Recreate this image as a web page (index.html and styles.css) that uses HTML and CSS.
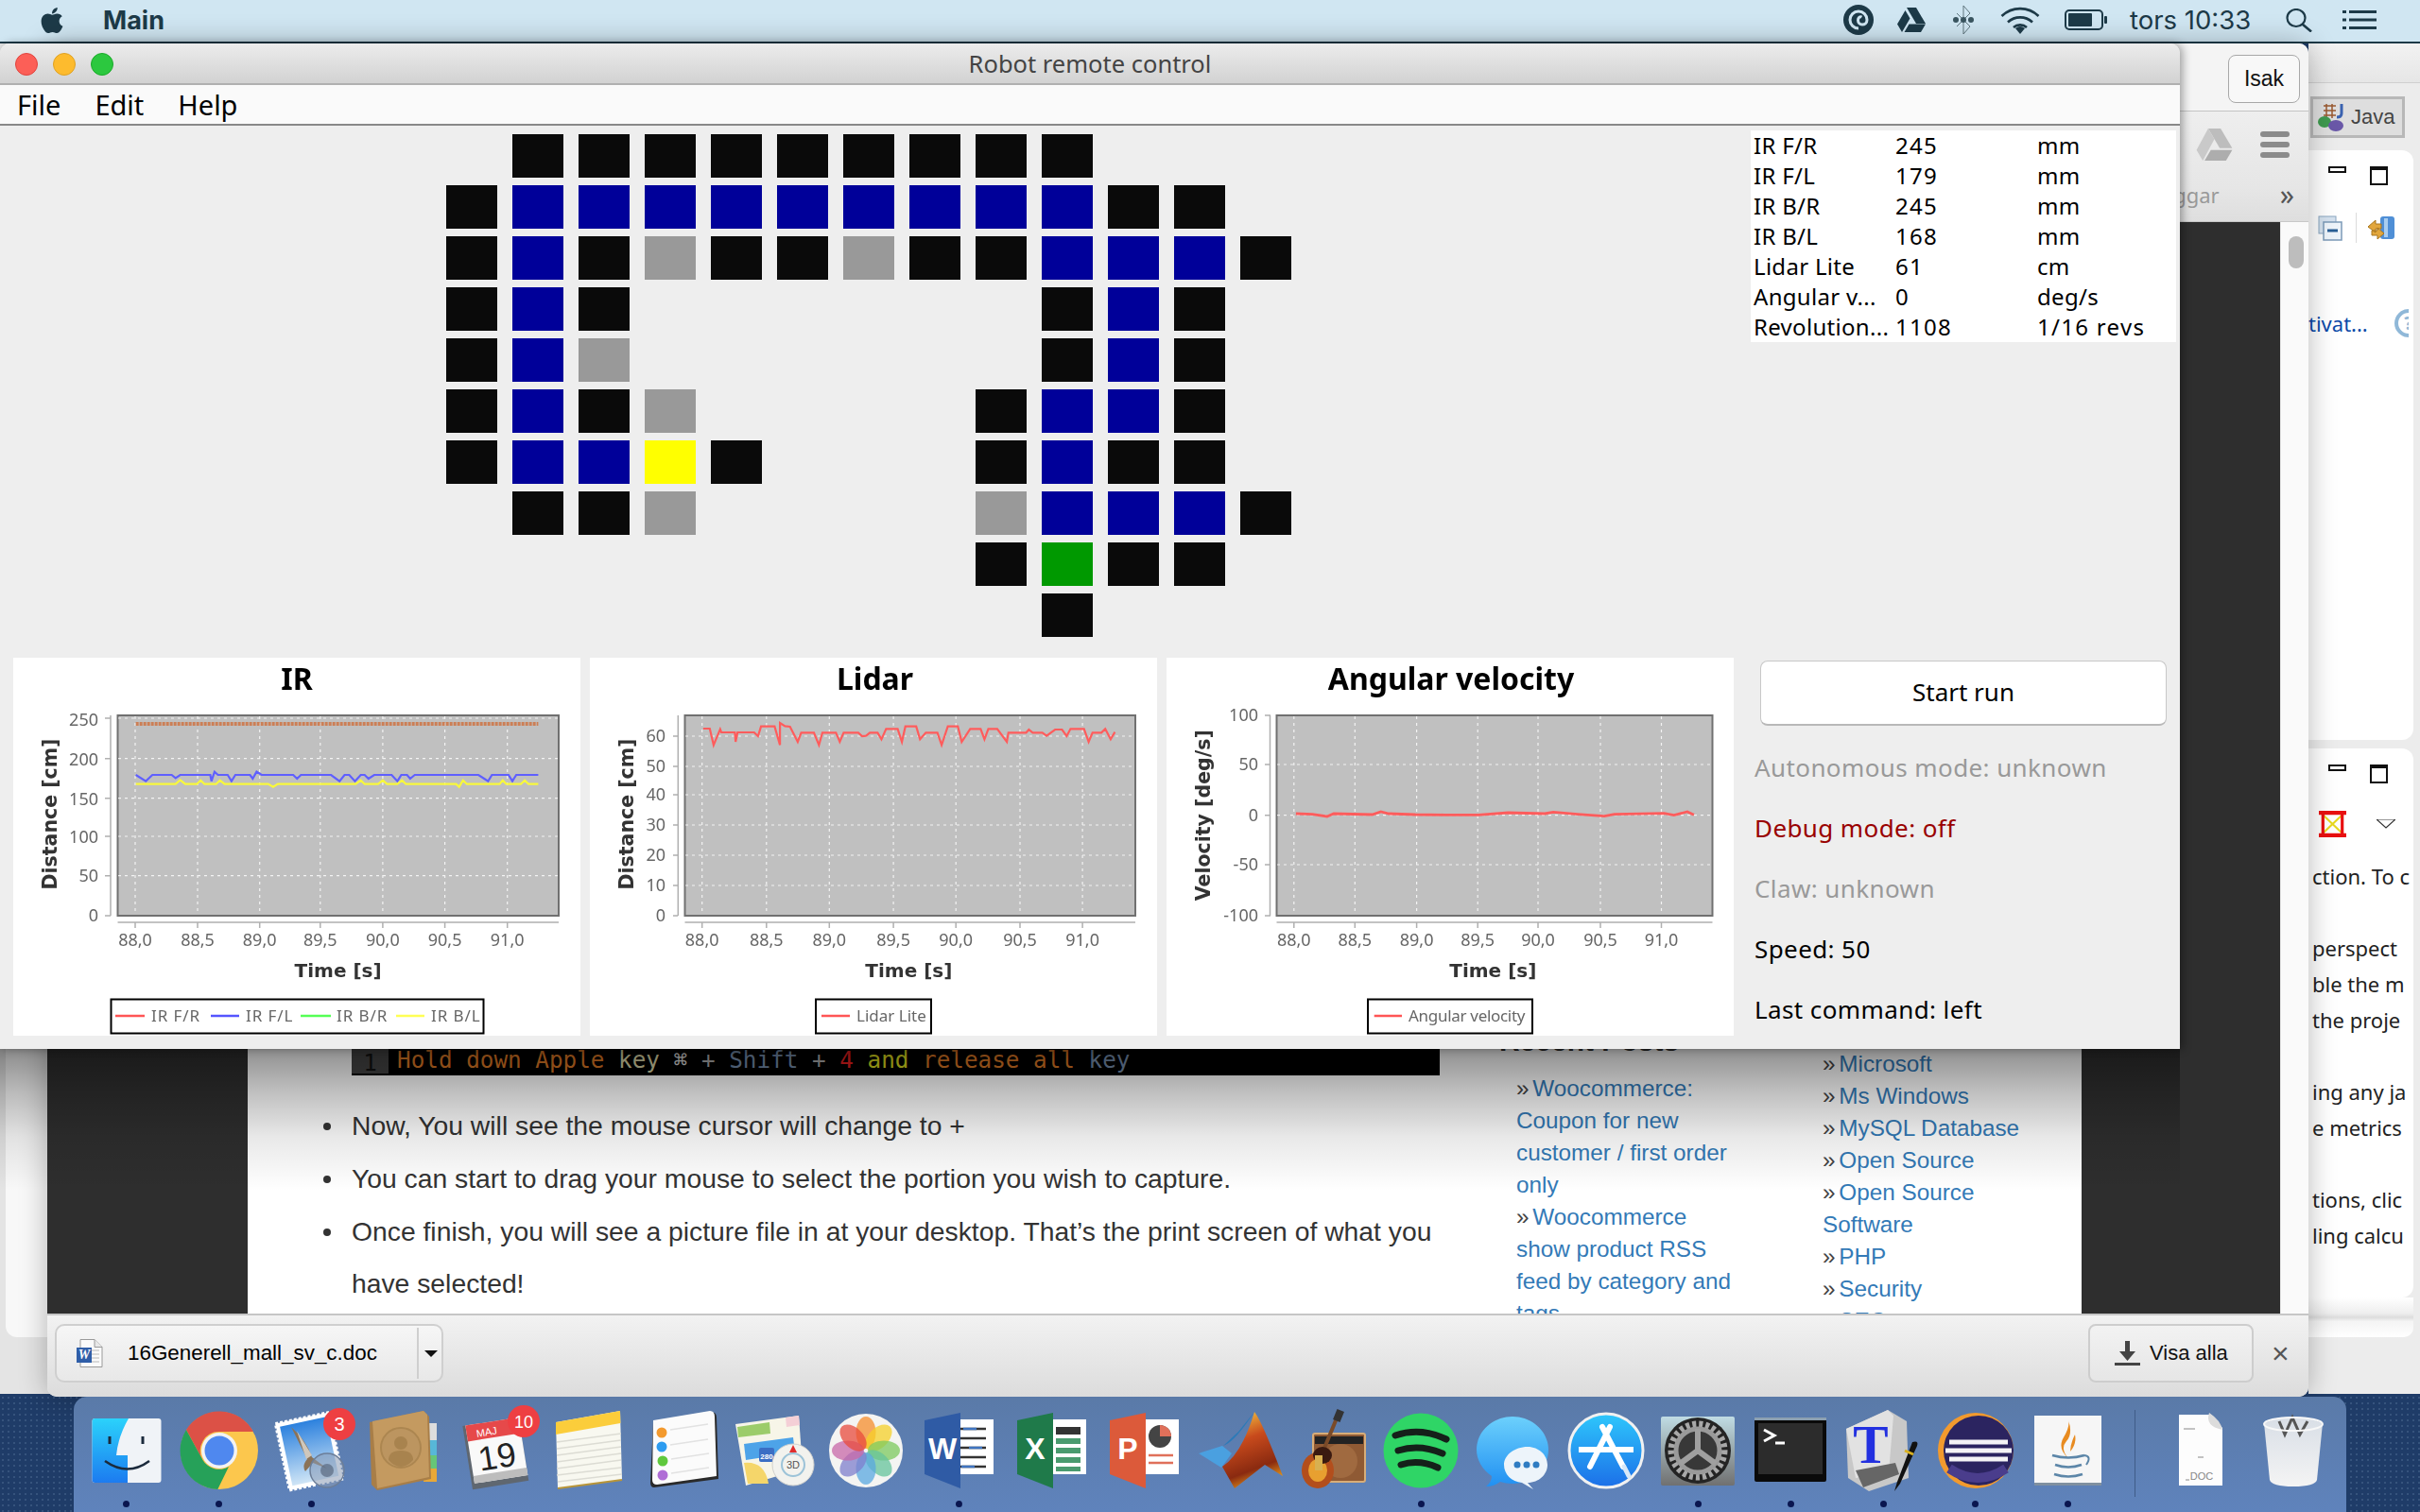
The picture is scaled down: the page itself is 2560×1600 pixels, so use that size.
FILE: index.html
```html
<!DOCTYPE html>
<html lang="sv">
<head>
<meta charset="utf-8">
<title>Robot remote control</title>
<link rel="stylesheet" href="styles.css">
</head>
<body>
<div class="desktop">

  <header class="menubar">
    <svg class="apple" viewBox="0 0 384 512"><path d="M318.7 268.7c-.2-36.7 16.4-64.4 50-84.8-18.8-26.9-47.2-41.7-84.7-44.6-35.5-2.8-74.3 20.7-88.5 20.7-15 0-49.4-19.7-76.4-19.7C63.3 141.2 4 184.8 4 273.5q0 39.3 14.4 81.2c12.8 36.7 59 126.7 107.2 125.2 25.2-.6 43-17.9 75.8-17.9 31.8 0 48.3 17.9 76.4 17.9 48.6-.7 90.4-82.5 102.6-119.3-65.2-30.7-61.7-90-61.7-91.9zm-56.6-164.2c27.3-32.4 24.8-61.9 24-72.5-24.1 1.4-52 16.4-67.9 34.9-17.5 19.8-27.8 44.3-25.6 71.9 26.1 2 49.9-11.4 69.5-34.3z"/></svg>
    <strong class="appname">Main</strong>
    <svg class="mi m-ring" viewBox="0 0 32 32"><circle cx="16" cy="16" r="16"/><path d="M16 25a9 9 0 1 1 9-9c0 3.500-2.500 5-5 5s-4.500-2-4.500-4.500 2-4.500 4-3.500" fill="none" stroke="#d0e6f2" stroke-width="3"/></svg>
    <svg class="mi m-drive" viewBox="0 0 30 26"><path d="M10 0h10l10 17h-10zM8.500 3l5 8.500L5 26 0 17.500zM7.500 26l5-8.500h17.500l-5 8.500z"/></svg>
    <svg class="mi m-bt" viewBox="0 0 22 32"><path d="M11 1v30l7-8-14-14M11 1l7 8-14 14" fill="none" stroke="#60777f" stroke-width="1"/><circle cx="3" cy="16" r="3" fill="#3a5560"/><circle cx="11" cy="16" r="3" fill="#3a5560"/><circle cx="19" cy="16" r="3" fill="#3a5560"/></svg>
    <svg class="mi m-wifi" viewBox="0 0 42 30"><path d="M1.500 11a28 28 0 0 1 39 0M8 17.500a19 19 0 0 1 26 0M14 23a10.500 10.500 0 0 1 14 0" fill="none" stroke="#1d3a48" stroke-width="2.600"/><path d="M21 30l-5-6a8 8 0 0 1 10 0z"/></svg>
    <svg class="mi m-batt" viewBox="0 0 45 22"><rect x="1" y="1" width="39" height="20" rx="4" fill="none" stroke="#1d3a48" stroke-width="2"/><rect x="4" y="4" width="25" height="14" rx="1"/><rect x="42" y="7" width="3" height="8" rx="1"/></svg>
    <span class="clock">tors 10:33</span>
    <svg class="mi m-search" viewBox="0 0 29 25"><ellipse cx="11" cy="10" rx="9.500" ry="9" fill="none" stroke="#1d3a48" stroke-width="2.200"/><path d="M17.500 16.500L27 24.500" stroke="#1d3a48" stroke-width="2.600"/></svg>
    <svg class="mi m-list" viewBox="0 0 36 20"><path d="M0 0h4v3H0zM0 8.500h4v3H0zM0 17h4v3H0zM7 0h29v3H7zM7 8.500h29v3H7zM7 17h29v3H7z"/></svg>
  </header>

  <section class="win eclipse">
    <div class="ecl-title"></div>
    <div class="ecl-persp">
      <div class="java-btn">
        <svg class="java-ico" viewBox="0 0 30 30"><path d="M6 3h13M6 8h13M6 13h13M9 1v15M15 1v15" stroke="#9a5a30" stroke-width="1.500" fill="none"/><path d="M25 1v10q0 4-5 4" stroke="#3a62b0" stroke-width="3" fill="none"/><ellipse cx="7" cy="20" rx="7" ry="6" fill="#3f9a50"/><ellipse cx="19" cy="24" rx="8" ry="6" fill="#6a58a8"/></svg>
        <span>Java</span>
      </div>
    </div>
    <div class="ecl-panel first">
      <div class="ecl-ctl"><span class="ctl-min"></span><span class="ctl-max"></span></div>
      <div class="ecl-tools">
        <svg class="tool" viewBox="0 0 26 27"><rect x="1" y="1" width="18" height="18" fill="#d5e2ef" stroke="#8aa5c0"/><rect x="6" y="7" width="19" height="19" fill="#eef4fa" stroke="#7c9ab8" stroke-width="1.500"/><path d="M10 16h11" stroke="#2a5f95" stroke-width="3"/></svg>
        <i class="tool-sep"></i>
        <svg class="tool wide" viewBox="0 0 30 27"><rect x="14" y="1" width="15" height="24" rx="3" fill="#4f8fd6"/><rect x="18" y="3" width="4" height="20" fill="#a9cdf0"/><path d="M1 12l8-7v4h6v5H9v4zM18 19l-7 6v-4H5v-5h6v-3z" fill="#e2a63c" stroke="#a87720"/></svg>
      </div>
      <div class="ecl-link"><span>tivat...</span><span class="help-clip"><i class="help-ring">?</i></span></div>
    </div>
    <div class="ecl-panel second">
      <div class="ecl-ctl"><span class="ctl-min"></span><span class="ctl-max"></span></div>
      <div class="ecl-tools two">
        <svg class="tool redbox" viewBox="0 0 27 26"><path d="M3 3l21 20M24 3L3 23" stroke="#e8d820" stroke-width="2"/><path d="M0 2h27M0 24h27" stroke="#e81010" stroke-width="4"/><path d="M4 2v22M23 2v22" stroke="#e81010" stroke-width="3"/></svg>
        <svg class="tool chev" viewBox="0 0 20 10"><path d="M0 0h20L10 9z" fill="#fff" stroke="#333" stroke-width="1.200"/></svg>
      </div>
      <p class="ecl-text first-line">ction. To c</p>
      <p class="ecl-text gap1">perspect</p>
      <p class="ecl-text">ble the m</p>
      <p class="ecl-text">the proje</p>
      <p class="ecl-text gap1">ing any ja</p>
      <p class="ecl-text">e metrics</p>
      <p class="ecl-text gap1">tions, clic</p>
      <p class="ecl-text">ling calcu</p>
    </div>
    <div class="ecl-band"></div>
  </section>

  <section class="win back"><div class="back-inner"></div></section>

  <section class="win chrome">
    <div class="chrome-top"><button class="isak">Isak</button></div>
    <div class="chrome-tools">
      <div class="tools-row">
        <svg class="drive-ico" viewBox="0 0 40 36"><path d="M13 0h14l13 22H26z" fill="#bdbdbd"/><path d="M13 0l7 12L7 36 0 24z" fill="#c9c9c9"/><path d="M9 36l7-12h24l-7 12z" fill="#adadad"/></svg>
        <div class="burger"><i></i><i></i><i></i></div>
      </div>
      <div class="book-row"><span class="ggar">ggar</span><span class="more">»</span></div>
    </div>
    <div class="page">
      <div class="page-dark left"></div>
      <article class="page-white">
        <div class="post">
          <div class="code">
            <span class="gutter">1</span>
            <code class="code-line"><span class="c-o">Hold down Apple</span> <span class="c-k">key</span> <span class="c-s">⌘</span> <span class="c-p">+</span> <span class="c-v">Shift</span> <span class="c-p">+</span> <span class="c-r">4</span> <span class="c-a">and</span> <span class="c-o">release all</span> <span class="c-v">key</span></code>
          </div>
          <ul class="steps">
            <li>Now, You will see the mouse cursor will change to +</li>
            <li>You can start to drag your mouse to select the portion you wish to capture.</li>
            <li>Once finish, you will see a picture file in at your desktop. That’s the print screen of what you have selected!</li>
          </ul>
        </div>
        <aside class="recent">
          <h3>Recent Posts</h3>
          <ul class="links">
            <li>» <a>Woocommerce: Coupon for new customer / first order only</a></li>
            <li>» <a>Woocommerce show product RSS feed by category and tags</a></li>
          </ul>
        </aside>
        <aside class="cats">
          <ul class="links">
            <li>» <a>Microsoft</a></li>
            <li>» <a>Ms Windows</a></li>
            <li>» <a>MySQL Database</a></li>
            <li>» <a>Open Source</a></li>
            <li>» <a>Open Source Software</a></li>
            <li>» <a>PHP</a></li>
            <li>» <a>Security</a></li>
            <li>» <a>SEO</a></li>
          </ul>
        </aside>
      </article>
      <div class="page-dark right"></div>
      <div class="scrollbar"><i></i></div>
    </div>
    <footer class="downloads">
      <div class="dl-item">
        <svg class="dl-doc" viewBox="0 0 28 30"><path d="M4 .500h15l8 8v21H4z" fill="#fafafa" stroke="#9a9a9a"/><path d="M19 .500v8h8" fill="#e8e8e8" stroke="#9a9a9a"/><path d="M14 12h10M14 16h10M14 20h10M14 24h10" stroke="#b8b8b8"/><rect y="9" width="16" height="16" fill="#2f5ea8"/><text class="dl-w" x="8" y="21">W</text></svg>
        <span class="dl-name">16Generell_mall_sv_c.doc</span>
        <span class="dl-caret"></span>
      </div>
      <button class="visa">
        <svg class="visa-ico" viewBox="0 0 27 26"><path d="M11 0h5v11h6l-8.500 10L5 11h6zM0 23h27v3H0z" fill="#444"/></svg>
        <span>Visa alla</span>
      </button>
      <span class="dl-close">×</span>
    </footer>
  </section>

  <div class="window-shadow"></div>

  <section class="win robot">
    <div class="robot-title">
      <div class="lights"><i class="red"></i><i class="amber"></i><i class="green"></i></div>
      <span class="robot-name">Robot remote control</span>
    </div>
    <nav class="robot-menu"><span>File</span><span>Edit</span><span>Help</span></nav>
    <div class="robot-top">
      <div class="map">
        <i></i><b class="k"></b><b class="k"></b><b class="k"></b><b class="k"></b><b class="k"></b><b class="k"></b><b class="k"></b><b class="k"></b><b class="k"></b><i></i><i></i><i></i>
        <b class="k"></b><b class="b"></b><b class="b"></b><b class="b"></b><b class="b"></b><b class="b"></b><b class="b"></b><b class="b"></b><b class="b"></b><b class="b"></b><b class="k"></b><b class="k"></b><i></i>
        <b class="k"></b><b class="b"></b><b class="k"></b><b class="g"></b><b class="k"></b><b class="k"></b><b class="g"></b><b class="k"></b><b class="k"></b><b class="b"></b><b class="b"></b><b class="b"></b><b class="k"></b>
        <b class="k"></b><b class="b"></b><b class="k"></b><i></i><i></i><i></i><i></i><i></i><i></i><b class="k"></b><b class="b"></b><b class="k"></b><i></i>
        <b class="k"></b><b class="b"></b><b class="g"></b><i></i><i></i><i></i><i></i><i></i><i></i><b class="k"></b><b class="b"></b><b class="k"></b><i></i>
        <b class="k"></b><b class="b"></b><b class="k"></b><b class="g"></b><i></i><i></i><i></i><i></i><b class="k"></b><b class="b"></b><b class="b"></b><b class="k"></b><i></i>
        <b class="k"></b><b class="b"></b><b class="b"></b><b class="y"></b><b class="k"></b><i></i><i></i><i></i><b class="k"></b><b class="b"></b><b class="k"></b><b class="k"></b><i></i>
        <i></i><b class="k"></b><b class="k"></b><b class="g"></b><i></i><i></i><i></i><i></i><b class="g"></b><b class="b"></b><b class="b"></b><b class="b"></b><b class="k"></b>
        <i></i><i></i><i></i><i></i><i></i><i></i><i></i><i></i><b class="k"></b><b class="n"></b><b class="k"></b><b class="k"></b><i></i>
        <i></i><i></i><i></i><i></i><i></i><i></i><i></i><i></i><i></i><b class="k"></b><i></i><i></i><i></i>
      </div>
      <table class="sensors">
        <tr><td>IR F/R</td><td>245</td><td>mm</td></tr>
        <tr><td>IR F/L</td><td>179</td><td>mm</td></tr>
        <tr><td>IR B/R</td><td>245</td><td>mm</td></tr>
        <tr><td>IR B/L</td><td>168</td><td>mm</td></tr>
        <tr><td>Lidar Lite</td><td>61</td><td>cm</td></tr>
        <tr><td>Angular v...</td><td>0</td><td>deg/s</td></tr>
        <tr><td>Revolution...</td><td>1108</td><td class="wide">1/16 revs</td></tr>
      </table>
    </div>
    <div class="robot-bottom">
      <div class="charts">
        <svg class="chart" viewBox="0 0 600 400">
          <text class="ctitle" x="300" y="34">IR</text>
          <rect class="plot" x="110.500" y="61" width="466.500" height="212"/>
          <path class="grid" d="M129 62V272M195 62V272M260.700 62V272M324.800 62V272M390.900 62V272M456.600 62V272M522.700 62V272M111 64H576M111 106.700H576M111 148.700H576M111 189H576M111 230.700H576"/>
          <g transform="translate(-14,-16) scale(.40816,.33333)">
            <path class="s-orange" d="M352 258H1395"/>
            <path class="s-blue" d="M352 420L378 440 395 420H445L455 430 467 420H545L548 440 556 410 565 420H590L600 440 610 420H648L655 432 665 410 678 420H760L770 432 780 420H858L880 440 893 420H905L920 440 935 420H945L955 432 970 420H1015L1030 440 1040 420H1055L1063 432 1075 420H1240L1255 432 1265 440 1275 420H1318L1328 440 1338 420H1395"/>
            <path class="s-yellow" d="M352 449H455L467 436 480 449H510L520 437 530 449H560L570 437 582 449H695L708 458 720 449H922L935 437 945 449H980L992 437 1003 449H1030L1042 437 1052 449H1182L1190 458 1200 437 1210 449H1295L1303 437 1312 449H1350L1360 437 1370 449H1395"/>
          </g>
          <path class="axis-line" d="M103 61V273M97 64H103M97 106.700H103M97 148.700H103M97 189H103M97 230.700H103M97 273H103M110.500 280H577M129 280v6M195 280v6M260.700 280v6M324.800 280v6M390.900 280v6M456.600 280v6M522.700 280v6"/>
          <g class="yt">
            <text x="90" y="72">250</text><text x="90" y="114">200</text><text x="90" y="156">150</text><text x="90" y="196">100</text><text x="90" y="237">50</text><text x="90" y="279">0</text>
          </g>
          <g class="xt">
            <text x="129" y="305">88,0</text><text x="195" y="305">88,5</text><text x="260.700" y="305">89,0</text><text x="324.800" y="305">89,5</text><text x="390.900" y="305">90,0</text><text x="456.600" y="305">90,5</text><text x="522.700" y="305">91,0</text>
          </g>
          <text class="alabel" x="343.600" y="338">Time [s]</text>
          <text class="alabel side-label" transform="translate(46,165.500) rotate(-90)">Distance [cm]</text>
          <rect class="legend" x="103.500" y="361.500" width="394" height="36"/>
          <path class="l-red" d="M108 379H139"/><text class="lg ir" x="146" y="385">IR F/R</text>
          <path class="l-blue" d="M209 379H239"/><text class="lg ir" x="246" y="385">IR F/L</text>
          <path class="l-green" d="M304 379H336"/><text class="lg ir" x="342" y="385">IR B/R</text>
          <path class="l-yellow" d="M405 379H435"/><text class="lg ir" x="442" y="385">IR B/L</text>
        </svg>

        <svg class="chart" viewBox="0 0 600 400">
          <text class="ctitle" x="301.500" y="34">Lidar</text>
          <rect class="plot" x="100.500" y="61" width="476.500" height="212"/>
          <path class="grid" d="M118.700 62V272M186.800 62V272M253.300 62V272M321.100 62V272M387.200 62V272M455 62V272M521.100 62V272M101 83H576M101 115H576M101 145H576M101 177H576M101 209H576M101 241H576"/>
          <g transform="translate(-14,-16) scale(.40816,.33333)">
            <path class="s-red" d="M328 273L345 273 355 325 372 275 375 285 410 285 412 315 417 285 460 285 470 297 478 266 513 266 527 325 527 255 540 265 553 267 573 315 582 286 615 286 628 325 637 286 672 286 682 315 692 286 730 286 740 297 750 296 760 286 780 286 790 307 802 274 832 274 843 315 852 266 880 266 890 307 905 286 935 286 946 325 962 266 988 266 998 315 1020 274 1047 274 1057 307 1067 274 1090 274 1115 315 1119 286 1165 286 1172 276 1182 286 1207 286 1218 296 1240 276 1258 276 1270 297 1280 274 1315 274 1327 315 1337 286 1360 286 1370 274 1384 307 1395 284"/>
          </g>
          <path class="axis-line" d="M93.300 61V273M88 83H93M88 115H93M88 145H93M88 177H93M88 209H93M88 241H93M88 273H93M100.500 280H577M118.700 280v6M186.800 280v6M253.300 280v6M321.100 280v6M387.200 280v6M455 280v6M521.100 280v6"/>
          <g class="yt">
            <text x="80" y="89">60</text><text x="80" y="121">50</text><text x="80" y="151">40</text><text x="80" y="183">30</text><text x="80" y="215">20</text><text x="80" y="247">10</text><text x="80" y="279">0</text>
          </g>
          <g class="xt">
            <text x="118.700" y="305">88,0</text><text x="186.800" y="305">88,5</text><text x="253.300" y="305">89,0</text><text x="321.100" y="305">89,5</text><text x="387.200" y="305">90,0</text><text x="455" y="305">90,5</text><text x="521.100" y="305">91,0</text>
          </g>
          <text class="alabel" x="337.400" y="338">Time [s]</text>
          <text class="alabel side-label" transform="translate(46,165.500) rotate(-90)">Distance [cm]</text>
          <rect class="legend" x="239" y="361.500" width="122" height="36"/>
          <path class="l-red" d="M245 379H275"/><text class="lg" x="282" y="385">Lidar Lite</text>
        </svg>

        <svg class="chart" viewBox="0 0 600 400">
          <text class="ctitle" x="301" y="34">Angular velocity</text>
          <rect class="plot" x="116.500" y="61" width="461" height="212"/>
          <path class="grid" d="M134.800 62V272M199.300 62V272M264.600 62V272M329.200 62V272M393 62V272M459 62V272M523.500 62V272M117 113H577M117 166.700H577M117 219H577"/>
          <g transform="translate(-14,-16) scale(.70175,.33333)">
            <path class="s-red thick" d="M215 543L240 545 262 552 272 543 330 546 343 537 355 543 395 546 440 547 490 547 535 540 590 543 603 538 640 545 680 551 695 545 770 542 785 548 805 537 815 547"/>
          </g>
          <path class="axis-line" d="M109.500 61V273M104 61H110M104 113H110M104 166.700H110M104 219H110M104 273H110M116.500 280H577.500M134.800 280v6M199.300 280v6M264.600 280v6M329.200 280v6M393 280v6M459 280v6M523.500 280v6"/>
          <g class="yt">
            <text x="97" y="67">100</text><text x="97" y="119">50</text><text x="97" y="173">0</text><text x="97" y="225">-50</text><text x="97" y="279">-100</text>
          </g>
          <g class="xt">
            <text x="134.800" y="305">88,0</text><text x="199.300" y="305">88,5</text><text x="264.600" y="305">89,0</text><text x="329.200" y="305">89,5</text><text x="393" y="305">90,0</text><text x="459" y="305">90,5</text><text x="523.500" y="305">91,0</text>
          </g>
          <text class="alabel" x="345.300" y="338">Time [s]</text>
          <text class="alabel side-label" transform="translate(46,166.700) rotate(-90)">Velocity [deg/s]</text>
          <rect class="legend" x="213" y="361.500" width="174" height="36"/>
          <path class="l-red" d="M219.700 379H249"/><text class="lg narrow" x="256" y="385">Angular velocity</text>
        </svg>
      </div>
      <div class="side">
        <button class="start">Start run</button>
        <p class="state dim">Autonomous mode: unknown</p>
        <p class="state off">Debug mode: off</p>
        <p class="state dim">Claw: unknown</p>
        <p class="state">Speed: 50</p>
        <p class="state">Last command: left</p>
      </div>
    </div>
  </section>

  <footer class="dock">
    <div class="dock-item"><svg viewBox="0 0 90 90"><defs><linearGradient id="fb" x1="0" y1="0" x2="0" y2="1"><stop offset="0" stop-color="#2bd2fb"/><stop offset="1" stop-color="#1c7bf0"/></linearGradient></defs><rect x="8.500" y="11" width="73" height="68" rx="3" fill="#f0f3f7"/><path d="M11.500 11H47Q36 30 34 50H46V79H11.500a3 3 0 0 1-3-3V14a3 3 0 0 1 3-3z" fill="url(#fb)"/><path d="M27 30v8M62 30v8" stroke="#1b2a3c" stroke-width="3"/><path d="M22 56q24 17 47 0" fill="none" stroke="#1b2a3c" stroke-width="2.500"/></svg><i class="dot"></i></div>
    <div class="dock-item"><svg viewBox="0 0 90 90"><circle cx="45" cy="45" r="41" fill="#fcc74d"/><path d="M10 23A41 41 0 0 1 81 25H45A20 20 0 0 0 27.500 55z" fill="#dc5146"/><path d="M10 23L27.500 55A20 20 0 0 0 55 62L43.300 86A41 41 0 0 1 10 23z" fill="#26a159"/><circle cx="45" cy="45" r="19" fill="#f3f3f3"/><circle cx="45" cy="45" r="15.500" fill="#4f88ef"/></svg><i class="dot"></i></div>
    <div class="dock-item"><svg viewBox="0 0 90 90"><defs><linearGradient id="sky" x1="0" y1="0" x2="0" y2="1"><stop offset="0" stop-color="#2c81de"/><stop offset="1" stop-color="#cfe5f6"/></linearGradient></defs><g transform="rotate(-12 42 45)"><rect x="14" y="10" width="58" height="72" fill="#fff" stroke="#fff" stroke-width="3" stroke-dasharray="3 2"/><rect x="18" y="14" width="50" height="64" fill="url(#sky)"/></g><path d="M24 20q16 14 22 32l16 12-15-6-8 9q-4-6 2-13z" fill="#8b7358"/><path d="M30 24l16 26-6 4z" fill="#cfc7bb"/><circle cx="62" cy="66" r="18" fill="#8a9bb5" fill-opacity=".55" stroke="#6c7e98" stroke-width="1.500"/><circle cx="62" cy="66" r="7" fill="#5a6a80" fill-opacity=".7"/><circle cx="75" cy="17" r="17" fill="#ee3f42"/><text class="badge" x="75" y="24">3</text></svg><i class="dot"></i></div>
    <div class="dock-item"><svg viewBox="0 0 90 90"><rect x="66" y="16" width="14" height="18" fill="#ddd"/><rect x="66" y="34" width="14" height="16" fill="#57b7d8"/><rect x="66" y="50" width="14" height="14" fill="#66c678"/><rect x="66" y="64" width="14" height="14" fill="#e8a838"/><path d="M9 15L66 3l6 6 2 66-57 12-6-6z" fill="#a87e48"/><path d="M12 14L66 3l4 4 2 66-55 12z" fill="#c49a60"/><circle cx="42" cy="42" r="21" fill="#bc9560" stroke="#ac8650" stroke-width="2"/><circle cx="42" cy="37" r="7" fill="#a8834e"/><path d="M29 55q0-10 13-10t13 10q-6 7-13 7t-13-7z" fill="#a8834e"/></svg></div>
    <div class="dock-item"><svg viewBox="0 0 90 90"><g transform="rotate(-9 44 46)"><rect x="14" y="14" width="60" height="68" fill="#5f6770"/><rect x="17" y="14" width="57" height="62" fill="#f9f9f9"/><path d="M17 14h57v17H17z" fill="#e6494a"/><rect x="17" y="68" width="57" height="8" fill="#bdbdbd"/><text class="cal-mon" x="38" y="28">MAJ</text><text class="cal-day" x="45" y="64">19</text></g><circle cx="74" cy="14" r="17" fill="#ee3f42"/><text class="badge small" x="74" y="21">10</text></svg></div>
    <div class="dock-item"><svg viewBox="0 0 90 90"><path d="M10 15L78 3l2 73-68 9z" fill="#f8f8f0"/><path d="M10 15L78 3l.400 13L10 28z" fill="#fbcd3b"/><path d="M11 36l68-9M11 43l68-9M11 50l68-9M11 57l68-9M11 64l68-9M11 71l68-8M12 78l68-8" stroke="#dcdcd4" stroke-width="1.500"/><path d="M12 85l68-9" stroke="#b89538" stroke-width="2"/></svg></div>
    <div class="dock-item"><svg viewBox="0 0 90 90"><path d="M15 15L76 4q6 0 6 6l2 65-68 9q-4 0-4-5z" fill="#2a2a2a"/><path d="M15 13L75 3q5 0 5 6l2 63-63 9q-5 0-5-5z" fill="#fbfbfb"/><circle cx="24" cy="26" r="5.500" fill="#f39a2e"/><circle cx="24" cy="41" r="5.500" fill="#2d9cf0"/><circle cx="25" cy="56" r="5.500" fill="#5fc83d"/><circle cx="25" cy="71" r="5.500" fill="#b06ed6"/><path d="M33 23l40-6M33 39l40-6M34 54l40-6M34 69l40-6" stroke="#e2e2e2" stroke-width="1.500"/></svg></div>
    <div class="dock-item"><svg viewBox="0 0 90 90"><path d="M5 17L72 8l4 56-60 18z" fill="#f7f5e8"/><path d="M7 20l34-5 1 12-34 4z" fill="#9ccc6a"/><path d="M58 10l14-2 1 10-14 2z" fill="#f4cfd6"/><path d="M14 38l52-7 2 16-52 8z" fill="#4da3e8"/><path d="M14 58q22-2 26 22H18z" fill="#f5d66a"/><rect x="30" y="42" width="16" height="15" rx="2" fill="#3b6ec4"/><text class="map-num" x="38" y="54">280</text><circle cx="66" cy="60" r="22" fill="#f2f2ee" stroke="#d0d0cc"/><path d="M66 39l4 8h-8z" fill="#e12c2c"/><circle cx="66" cy="60" r="12" fill="none" stroke="#9cc3d8" stroke-width="2"/><text class="map-3d" x="66" y="64">3D</text></svg></div>
    <div class="dock-item"><svg viewBox="0 0 90 90"><circle cx="45" cy="45" r="39" fill="#f4f4f2"/><g fill-opacity=".75"><ellipse cx="45" cy="26" rx="10.500" ry="17" fill="#f58e2c"/><ellipse cx="45" cy="26" rx="10.500" ry="17" fill="#f5d028" transform="rotate(45 45 45)"/><ellipse cx="45" cy="26" rx="10.500" ry="17" fill="#7cc95e" transform="rotate(90 45 45)"/><ellipse cx="45" cy="26" rx="10.500" ry="17" fill="#66c49b" transform="rotate(135 45 45)"/><ellipse cx="45" cy="26" rx="10.500" ry="17" fill="#5aa8e0" transform="rotate(180 45 45)"/><ellipse cx="45" cy="26" rx="10.500" ry="17" fill="#7f7fcc" transform="rotate(225 45 45)"/><ellipse cx="45" cy="26" rx="10.500" ry="17" fill="#c868a8" transform="rotate(270 45 45)"/><ellipse cx="45" cy="26" rx="10.500" ry="17" fill="#e84b3c" transform="rotate(315 45 45)"/></g></svg></div>
    <div class="dock-item"><svg viewBox="0 0 90 90"><rect x="38" y="12" width="44" height="58" fill="#fff"/><path d="M46 22h28M46 32h28M46 42h28M46 52h28M46 62h28" stroke="#333" stroke-width="2.500"/><path d="M50 22h14M56 42h14M48 62h14" stroke="#3f74c0" stroke-width="2.500"/><path d="M9 13L47 5v80L9 70z" fill="#2f5ba5"/><text class="office" x="28" y="54">W</text></svg><i class="dot"></i></div>
    <div class="dock-item"><svg viewBox="0 0 90 90"><rect x="38" y="12" width="44" height="58" fill="#fff"/><path d="M50 20h26v8H50z" fill="#333"/><path d="M50 32h26v6H50zM50 42h26v6H50zM50 52h26v6H50zM50 62h26v5H50z" fill="#4a9b6f"/><path d="M9 13L47 5v80L9 70z" fill="#1f7a4a"/><text class="office" x="28" y="54">X</text></svg></div>
    <div class="dock-item"><svg viewBox="0 0 90 90"><rect x="38" y="12" width="44" height="58" fill="#fff"/><circle cx="62" cy="30" r="12" fill="#444"/><path d="M62 30V18a12 12 0 0 1 12 12z" fill="#e0705a"/><path d="M50 50h26M50 58h26" stroke="#e0705a" stroke-width="2.500"/><path d="M9 13L47 5v80L9 70z" fill="#dc5a3a"/><text class="office" x="28" y="54">P</text></svg></div>
    <div class="dock-item"><svg viewBox="0 0 90 90"><defs><linearGradient id="mat" x1=".3" y1="0" x2=".6" y2="1"><stop offset="0" stop-color="#f0c040"/><stop offset=".35" stop-color="#c84a1c"/><stop offset=".75" stop-color="#8a2a10"/><stop offset="1" stop-color="#f0a820"/></linearGradient></defs><path d="M6 48L31 40l10 8-11 15z" fill="#4aa0e0"/><path d="M32 40q12-4 33-36L48 25z" fill="#2c7ab8"/><path d="M65 4q8 10 30 68L76 60 44 85 31 62Q52 48 65 4z" fill="url(#mat)"/></svg></div>
    <div class="dock-item"><svg viewBox="0 0 90 90"><rect x="29" y="27" width="55" height="51" rx="2" fill="#8f5a34" stroke="#d8ad78" stroke-width="2"/><rect x="31" y="30" width="51" height="8" fill="#222"/><circle cx="58" cy="56" r="18" fill="#a06a40"/><path d="M56 6L37 52" stroke="#7a4a28" stroke-width="4"/><rect x="52" y="2" width="8" height="12" fill="#333" transform="rotate(22 56 8)"/><ellipse cx="34" cy="66" rx="17" ry="19" fill="#b34e1c"/><ellipse cx="34" cy="66" rx="10" ry="12" fill="#e8a030"/><ellipse cx="39" cy="50" rx="10" ry="9" fill="#3a1a10"/><rect x="31" y="50" width="8" height="16" fill="#d8b050"/></svg></div>
    <div class="dock-item"><svg viewBox="0 0 90 90"><circle cx="45" cy="45" r="39.500" fill="#2fd566"/><path d="M18 29q27-9 54 4M21 45q23-7 47 3M24 60q19-6 39 3" fill="none" stroke="#15201a" stroke-width="7" stroke-linecap="round"/></svg><i class="dot"></i></div>
    <div class="dock-item"><svg viewBox="0 0 90 90"><defs><linearGradient id="msg" x1="0" y1="0" x2="0" y2="1"><stop offset="0" stop-color="#6cd0fc"/><stop offset="1" stop-color="#2190f2"/></linearGradient></defs><path d="M44 9c21 0 38 16 38 35 0 20-17 36-38 36-5 0-9-1-13-2-4 3-9 5-15 5 4-3 6-7 6-11C12 65 6 55 6 44 6 25 23 9 44 9z" fill="url(#msg)"/><path d="M60 41c12 0 21 9 21 19s-9 19-21 19l6 7-12-7c-11-1-19-9-19-19s11-19 25-19z" fill="#edf4fa"/><circle cx="49" cy="60" r="3.500" fill="#2f7cc2"/><circle cx="59" cy="60" r="3.500" fill="#2f7cc2"/><circle cx="69" cy="60" r="3.500" fill="#2f7cc2"/></svg></div>
    <div class="dock-item"><svg viewBox="0 0 90 90"><defs><linearGradient id="as" x1="0" y1="0" x2="0" y2="1"><stop offset="0" stop-color="#2ec7fc"/><stop offset="1" stop-color="#1c6fe8"/></linearGradient></defs><circle cx="45" cy="45" r="39" fill="url(#as)" stroke="#f1f1f1" stroke-width="3"/><path d="M16 44h58" stroke="#fff" stroke-width="6"/><path d="M49 20L28 62M41 20l22 42" stroke="#fff" stroke-width="6" stroke-linecap="round"/><path d="M64 62l5 10" stroke="#d8e8f8" stroke-width="5" stroke-linecap="round"/></svg></div>
    <div class="dock-item"><svg viewBox="0 0 90 90"><defs><linearGradient id="sp" x1="0" y1="0" x2="0" y2="1"><stop offset="0" stop-color="#c0dce4"/><stop offset="1" stop-color="#707070"/></linearGradient></defs><rect x="6" y="9" width="78" height="73" rx="2" fill="url(#sp)"/><circle cx="45" cy="45" r="35" fill="#242424"/><circle cx="45" cy="45" r="28" fill="none" stroke="#a8a8a8" stroke-width="7" stroke-dasharray="4 3"/><circle cx="45" cy="45" r="23" fill="#383838" stroke="#9a9a9a" stroke-width="5"/><path d="M45 45V22M45 45L26 59M45 45l19 14" stroke="#a0a0a0" stroke-width="6"/></svg><i class="dot"></i></div>
    <div class="dock-item"><svg viewBox="0 0 90 90"><rect x="7" y="10" width="76" height="68" rx="2" fill="#0a0a0a"/><rect x="7" y="10" width="76" height="3" fill="#8ca0b0"/><rect x="11" y="16" width="68" height="54" fill="#2c2c2c"/><path d="M17 23l11 6-11 6" fill="none" stroke="#fff" stroke-width="3"/><path d="M29 37h10" stroke="#fff" stroke-width="3"/></svg><i class="dot"></i></div>
    <div class="dock-item"><svg viewBox="0 0 90 90"><path d="M6 22L50 2l20 12 2 60-42 14-22-14z" fill="#c8c8c8"/><path d="M6 22L50 2l6 6-5 60-35 6z" fill="#e2e2e2"/><path d="M16 66l42-8 4 12-38 14z" fill="#666"/><text class="tex" x="32" y="58">T</text><path d="M76 36L60 78l-3 10 6-8 18-40q2-6-5-4z" fill="#111"/><path d="M68 45l9 4" stroke="#d8b020" stroke-width="3"/></svg><i class="dot"></i></div>
    <div class="dock-item"><svg viewBox="0 0 90 90"><circle cx="45" cy="45" r="40" fill="#f29a2e"/><circle cx="48" cy="45" r="37" fill="#2b2460"/><path d="M17 36h62M13 45h70M17 54h62" stroke="#fff" stroke-width="5" opacity=".95"/><path d="M17 64q30 20 60 0" fill="none" stroke="#4a3d8c" stroke-width="10"/></svg><i class="dot"></i></div>
    <div class="dock-item"><svg viewBox="0 0 90 90"><rect x="9" y="8" width="71" height="73" fill="#f6f6f6"/><rect x="9" y="79" width="71" height="3" fill="#8090a0"/><path d="M45 13q5 14-2 22t2 18q-12-10-5-22t5-18z" fill="#e88b20"/><path d="M52 28q2 10-5 18 0-8 5-18z" fill="#e88b20"/><path d="M28 50q17 5 34 0M31 60q14 5 28 0M30 70q15 5 30 0" fill="none" stroke="#5c86a8" stroke-width="2.500"/><path d="M62 50q8 1 2 10" fill="none" stroke="#5c86a8" stroke-width="2"/></svg><i class="dot"></i></div>
    <i class="dock-sep"></i>
    <div class="dock-item"><svg viewBox="0 0 90 90"><path d="M22 7h34l12 14v61H22z" fill="#fdfdfd"/><path d="M54 5q-5 14 14 18-2-10-14-18z" fill="#dcdcdc"/><path d="M27 22h12M42 52h6M29 76h4" stroke="#888"/><text class="doc-txt" x="46" y="76">DOC</text></svg></div>
    <div class="dock-item"><svg viewBox="0 0 90 90"><defs><linearGradient id="tr" x1="0" y1="0" x2="0" y2="1"><stop offset="0" stop-color="#d8dee6"/><stop offset="1" stop-color="#f4f4f4"/></linearGradient></defs><path d="M14 16q31-14 62 0l-6 60q-2 7-25 7t-25-7z" fill="url(#tr)"/><path d="M30 14l6 14 8-18 8 18 8-14" fill="none" stroke="#555" stroke-width="3"/><ellipse cx="45" cy="17" rx="31" ry="7" fill="none" stroke="#f8f8f8" stroke-width="2"/></svg></div>
  </footer>
</div>
</body>
</html>
```

FILE: styles.css
```css
* { box-sizing: border-box; }
html, body { margin: 0; width: 2560px; height: 1600px; overflow: hidden; }
p, h3, ul { margin: 0; padding: 0; }
button { font: inherit; padding: 0; }

.desktop {
  position: relative;
  width: 2560px;
  height: 1600px;
  background-color: #1f3c68;
  background-image: radial-gradient(rgba(160, 190, 220, .18) 1px, transparent 1.2px);
  background-size: 6px 6px;
  overflow: hidden;
}

/* macOS menu bar */
.menubar {
  height: 46px;
  display: flex;
  align-items: center;
  background: #d0e6f2;
  border-bottom: 2px solid #1d3a48;
  color: #1d3a48;
  padding: 0 46px 2px 42px;
  font-family: Inter, "Liberation Sans", sans-serif;
}
.apple { width: 26px; height: 31px; fill: #1d3a48; }
.appname { margin-left: 41px; margin-right: auto; font-size: 27px; font-weight: 700; }
.mi { fill: #1d3a48; display: block; }
.m-ring { width: 32px; height: 32px; }
.m-drive { width: 30px; height: 26px; margin-left: 25px; }
.m-bt { width: 22px; height: 32px; margin-left: 29px; }
.m-wifi { width: 42px; height: 30px; margin-left: 28px; }
.m-batt { width: 45px; height: 22px; margin-left: 26px; }
.clock { margin-left: 24px; font-size: 27.500px; white-space: nowrap; width: 129px; }
.m-search { width: 29px; height: 25px; margin-left: 36px; }
.m-list { width: 36px; height: 20px; margin-left: 31px; }

.win { position: absolute; }

/* Eclipse, behind everything on the right */
.eclipse {
  left: 2442px;
  top: 46px;
  width: 118px;
  height: 1429px;
  background: #ececec;
  border-top-right-radius: 12px;
  font-family: "Noto Sans", sans-serif;
}
.ecl-title { height: 42px; background: linear-gradient(#f2f2f2, #e6e6e6); border-bottom: 1px solid #cfcfcf; }
.ecl-persp { height: 71px; padding: 14px 0 0 2px; }
.java-btn {
  width: 100px;
  height: 44px;
  display: flex;
  align-items: center;
  gap: 5px;
  padding-left: 5px;
  background: #dedede;
  border: 3px solid #b8b8b8;
  font-size: 22px;
  color: #444;
  font-family: "Liberation Sans", sans-serif;
}
.java-ico { width: 30px; height: 30px; flex: none; }
.ecl-panel {
  background: #fff;
  width: 111px;
  border-radius: 0 12px 12px 0;
  overflow: hidden;
  white-space: nowrap;
}
.ecl-panel.first { height: 624px; }
.ecl-panel.second { height: 581px; margin-top: 9px; }
.ecl-ctl { display: flex; height: 20px; margin-top: 17px; padding-left: 21px; gap: 25px; align-items: flex-start; }
.ctl-min { width: 19px; height: 7px; border: 2px solid #111; }
.ctl-max { width: 19px; height: 20px; border: 2px solid #111; border-top-width: 4px; }
.ecl-tools { display: flex; align-items: center; gap: 14px; padding-left: 10px; margin-top: 29px; }
.tool { width: 26px; height: 27px; flex: none; }
.tool.wide { width: 30px; margin-left: -3px; }
.tool-sep { width: 1px; height: 32px; background: #dcdcdc; flex: none; }
.ecl-tools.two { margin-top: 29px; gap: 32px; padding-left: 11px; }
.tool.redbox { width: 29px; height: 28px; }
.tool.chev { width: 20px; height: 10px; }
.ecl-link { display: flex; align-items: center; justify-content: space-between; margin-top: 70px; font-size: 22px; color: #0b4aa8; height: 30px; }
.help-clip { display: block; width: 15px; height: 30px; overflow: hidden; margin-right: 5px; flex: none; }
.help-ring { display: block; width: 30px; height: 30px; border: 4px solid #90b8d8; border-radius: 50%; color: #90b8d8; font-style: normal; font-weight: 700; font-size: 20px; line-height: 22px; text-align: center; }
.ecl-text { height: 38px; line-height: 38px; font-size: 22px; color: #222; padding-left: 4px; }
.first-line { margin-top: 22px; }
.gap1 { margin-top: 38px; }
.ecl-band { width: 111px; height: 42px; background: linear-gradient(#fff, #eee 40%, #ddd 50%, #f4f4f4 60%, #fff); border-radius: 0 0 10px 0; }

/* window behind Chrome, at the left */
.back { left: 0; top: 46px; width: 60px; height: 1429px; background: #e4e4e4; }
.back-inner { margin-left: 6px; height: 1369px; background: #f8f8f8; border-radius: 0 0 0 12px; }

/* Chrome */
.chrome {
  left: 50px;
  top: 46px;
  width: 2392px;
  height: 1432px;
  display: flex;
  flex-direction: column;
  border-radius: 10px;
  overflow: hidden;
  box-shadow: 0 0 30px rgba(0, 0, 0, .28);
  background: #eee;
}
.chrome-top {
  height: 72px;
  flex: none;
  display: flex;
  justify-content: flex-end;
  align-items: flex-start;
  padding: 12px 9px 0 0;
  background: #f4f4f4;
  border-bottom: 1px solid #c4c4c4;
}
.isak {
  width: 76px;
  height: 51px;
  background: #f8f8f8;
  border: 1px solid #a8a8a8;
  border-radius: 8px;
  font-family: "Liberation Sans", sans-serif;
  font-size: 23px;
  color: #111;
}
.chrome-tools { height: 117px; flex: none; background: linear-gradient(#eee, #e6e6e6 70%, #dedede); display: flex; flex-direction: column; border-bottom: 1px solid #c8c8c8; }
.tools-row { height: 70px; display: flex; align-items: center; justify-content: flex-end; padding-right: 20px; gap: 29px; }
.drive-ico { width: 39px; height: 34px; }
.burger { width: 31px; display: flex; flex-direction: column; gap: 5px; }
.burger i { height: 6px; background: #8b8b8b; border-radius: 3px; }
.book-row { display: flex; justify-content: flex-end; align-items: center; height: 36px; padding-right: 15px; gap: 64px; font-size: 22px; color: #999; font-family: "Noto Sans", sans-serif; }
.more { color: #555; font-size: 30px; line-height: 30px; }

.page { flex: 1; min-height: 0; display: flex; background: #fff; font-family: "Liberation Sans", sans-serif; }
.page-dark { flex: none; height: 100%; background: #2e2e2e; }
.page-dark.left { width: 212px; }
.page-dark.right { width: 210px; }
.scrollbar { flex: none; width: 30px; background: #fafafa; border-left: 1px solid #e8e8e8; padding: 15px 0 0 8px; }
.scrollbar i { display: block; width: 16px; height: 34px; background: #bdbdbd; border-radius: 8px; }
.page-white { flex: none; width: 1940px; display: flex; overflow: hidden; color: #333; }
.post { flex: none; width: 1324px; padding-left: 110px; display: flex; flex-direction: column; justify-content: flex-end; padding-bottom: 3px; }
.code { width: 1151px; height: 46px; flex: none; display: flex; align-items: flex-end; background: #000; margin-bottom: 26px; line-height: 32px; font-family: "DejaVu Sans Mono", monospace; font-size: 24.300px; }
.gutter { width: 39px; align-self: stretch; background: #444; color: #111; text-align: center; line-height: 66px; margin-right: 9px; margin-bottom: 2px; overflow: hidden; }
.code-line { font: inherit; white-space: pre; }
.c-o { color: #df7a26; }
.c-k { color: #dfdaaa; }
.c-s { color: #e0e0e0; }
.c-p { color: #b0b0b0; }
.c-v { color: #7890b0; }
.c-r { color: #ee2020; }
.c-a { color: #dede20; }
.steps { list-style: none; font-size: 28.300px; line-height: 55.700px; width: 1160px; }
.steps li { position: relative; }
.steps li::before { content: ""; position: absolute; left: -30px; top: 24px; width: 8px; height: 8px; border-radius: 50%; background: #333; }
.recent { flex: none; width: 320px; padding-top: 850px; }
.recent h3 { font-size: 30px; line-height: 34px; margin-bottom: 16px; color: #333; }
.recent .links { padding-left: 18px; width: 254px; }
.cats { flex: none; width: 216px; padding-top: 874px; margin-left: 22px; }
.links { list-style: none; font-size: 24.300px; line-height: 34px; color: #444; word-spacing: -3px; }
.links a { color: #337ab7; word-spacing: 0; }

.downloads {
  height: 88px;
  flex: none;
  display: flex;
  align-items: flex-start;
  padding: 9px 0 0 8px;
  background: linear-gradient(#f2f2f2, #dcdcdc);
  border-top: 2px solid #c6c6c6;
  font-family: "Liberation Sans", sans-serif;
}
.dl-item { position: relative; width: 411px; height: 62px; display: flex; align-items: center; padding-left: 21px; border: 2px solid #cfcfcf; border-radius: 10px; background: linear-gradient(#f6f6f6, #e8e8e8); }
.dl-item::after { content: ""; position: absolute; left: 381px; top: 2px; bottom: 2px; width: 2px; background: #cfcfcf; }
.dl-doc { width: 28px; height: 30px; flex: none; }
.dl-w { font: italic bold 14px "Liberation Serif", serif; fill: #fff; text-anchor: middle; }
.dl-name { margin-left: 26px; font-size: 22.400px; color: #000; width: 314px; white-space: nowrap; }
.dl-caret { width: 0; height: 0; border-left: 7px solid transparent; border-right: 7px solid transparent; border-top: 7px solid #111; }
.visa { margin-left: 1740px; width: 175px; height: 62px; display: flex; align-items: center; padding-left: 26px; gap: 10px; background: linear-gradient(#f2f2f2, #e6e6e6); border: 2px solid #cdcdcd; border-radius: 8px; font-size: 22px; color: #111; font-family: "Liberation Sans", sans-serif; }
.visa-ico { width: 27px; height: 26px; }
.dl-close { margin-left: 19px; font-size: 32px; line-height: 62px; color: #555; }

.window-shadow {
  position: absolute;
  left: 0;
  top: 1110px;
  width: 2306px;
  height: 150px;
  background: linear-gradient(rgba(0, 0, 0, .44), rgba(0, 0, 0, .25) 30%, rgba(0, 0, 0, .09) 62%, rgba(0, 0, 0, 0));
}

/* Robot remote control */
.robot {
  left: 0;
  top: 46px;
  width: 2306px;
  height: 1064px;
  display: flex;
  flex-direction: column;
  background: #eee;
  border-radius: 10px 10px 0 0;
  box-shadow: 3px 0 10px rgba(0, 0, 0, .35);
  font-family: "Noto Sans", sans-serif;
  overflow: hidden;
}
.robot-title {
  height: 44px;
  flex: none;
  position: relative;
  display: flex;
  align-items: center;
  justify-content: center;
  background: linear-gradient(#ececec, #d2d2d2);
  border-bottom: 2px solid #b0b0b0;
}
.lights { position: absolute; left: 16px; top: 10px; display: flex; gap: 16px; }
.lights i { width: 24px; height: 24px; border-radius: 50%; }
.red { background: #fc5f57; border: 1px solid #e0443e; }
.amber { background: #fdbb2e; border: 1px solid #dea123; }
.green { background: #2cc83f; border: 1px solid #1aab29; }
.robot-name { font-size: 25.500px; color: #444; }
.robot-menu {
  height: 43px;
  flex: none;
  display: flex;
  align-items: center;
  gap: 36px;
  padding-left: 18px;
  background: #fafafa;
  border-bottom: 2px solid #888;
  font-size: 29px;
  color: #000;
}
.robot-top { height: 563px; flex: none; display: flex; align-items: flex-start; padding: 5px 4px 0 472px; }
.map { margin-top: 4px; display: grid; grid-template-columns: repeat(13, 54px); grid-auto-rows: 46px; column-gap: 16px; row-gap: 8px; }
.map b { display: block; }
.k { background: #0a0a0a; }
.b { background: #000099; }
.g { background: #999; }
.y { background: #ff0; }
.n { background: #090; }
.sensors { margin-left: auto; width: 450px; height: 224px; background: #fff; border-collapse: collapse; table-layout: fixed; font-size: 24px; line-height: 30px; letter-spacing: .3px; }
.sensors td { height: 32px; width: 150px; padding: 0 0 0 3px; white-space: nowrap; color: #000; }
.sensors td:nth-child(2) { letter-spacing: 1.300px; }
.sensors td.wide { letter-spacing: 1.300px; }
.robot-bottom { flex: 1; display: flex; padding-left: 14px; align-items: flex-start; }
.charts { display: flex; gap: 10px; flex: none; }
.chart { width: 600px; height: 400px; background: #fff; display: block; filter: blur(.45px); }
.ctitle { font: 700 32px "Noto Sans", sans-serif; text-anchor: middle; fill: #000; }
.plot { fill: #c0c0c0; stroke: #707070; stroke-width: 2; }
.grid { fill: none; stroke: #fff; stroke-width: 1.200; stroke-dasharray: 3 4; opacity: .8; }
.axis-line { fill: none; stroke: #b0b0b0; stroke-width: 1.500; }
.yt text { font: 18px "Noto Sans", sans-serif; fill: #666; text-anchor: end; }
.xt text { font: 18px "Noto Sans", sans-serif; fill: #666; text-anchor: middle; }
.alabel { font: 700 20px "DejaVu Sans", sans-serif; fill: #333; text-anchor: middle; }
.side-label { font-size: 20.500px; }
.legend { fill: #fff; stroke: #000; stroke-width: 2; }
.lg { font: 17px "Noto Sans", sans-serif; fill: #666; }
.lg.ir { letter-spacing: .9px; }
.lg.narrow { letter-spacing: -.3px; }
.s-orange, .s-blue, .s-yellow, .s-red { fill: none; stroke-width: 2.200; vector-effect: non-scaling-stroke; }
.s-orange { stroke: #cc7f56; stroke-width: 4; stroke-dasharray: 3 1; }
.s-blue { stroke: #5f5fff; }
.s-yellow { stroke: #f8f83c; }
.s-red { stroke: #ff5c5c; }
.s-red.thick { stroke-width: 2.800; }
.l-red, .l-blue, .l-green, .l-yellow { fill: none; stroke-width: 2.500; }
.l-red { stroke: #ff5555; }
.l-blue { stroke: #5555ff; }
.l-green { stroke: #55ff55; }
.l-yellow { stroke: #ffff55; }
.side { flex: 1; padding: 3px 0 0 22px; font-size: 26px; }
.start { display: block; width: 430px; height: 69px; margin: 0 0 12px 6px; padding-bottom: 2px; background: #fff; border: 1px solid #c8c8c8; border-bottom: 2px solid #b8b8b8; border-radius: 8px; font-size: 26px; font-family: "Noto Sans", sans-serif; color: #000; }
.state { height: 64px; line-height: 64px; color: #000; white-space: nowrap; letter-spacing: .4px; }
.state.dim { color: #999; }
.state.off { color: #990000; }

/* Dock */
.dock {
  position: absolute;
  left: 78px;
  top: 1478px;
  width: 2404px;
  height: 122px;
  display: flex;
  padding: 12px 0 0 7px;
  background: linear-gradient(#5a7aa8, #5f83bc);
  border-radius: 14px 14px 0 0;
  font-family: "Liberation Sans", sans-serif;
}
.dock-item { flex: none; width: 97.800px; display: flex; flex-direction: column; align-items: center; }
.dock-item svg { width: 90px; height: 90px; overflow: visible; display: block; flex: none; }
.dot { width: 7px; height: 7px; margin-top: 8px; border-radius: 50%; background: #0a1650; }
.dock-sep { flex: none; width: 1px; height: 92px; margin: 2px 21px 0 21px; background: #3f5c88; }
.badge { font-size: 20px; fill: #fff; text-anchor: middle; }
.badge.small { font-size: 18px; }
.cal-mon { font-size: 11px; fill: #fff; text-anchor: middle; }
.cal-day { font-size: 36px; fill: #222; text-anchor: middle; }
.map-num { font-size: 8px; font-weight: 700; fill: #fff; text-anchor: middle; }
.map-3d { font-size: 11px; fill: #555; text-anchor: middle; }
.office { font-size: 32px; font-weight: 700; fill: #fff; text-anchor: middle; }
.tex { font: 700 56px "Liberation Serif", serif; fill: #2230e0; text-anchor: middle; }
.doc-txt { font-size: 11px; fill: #888; text-anchor: middle; }
```
